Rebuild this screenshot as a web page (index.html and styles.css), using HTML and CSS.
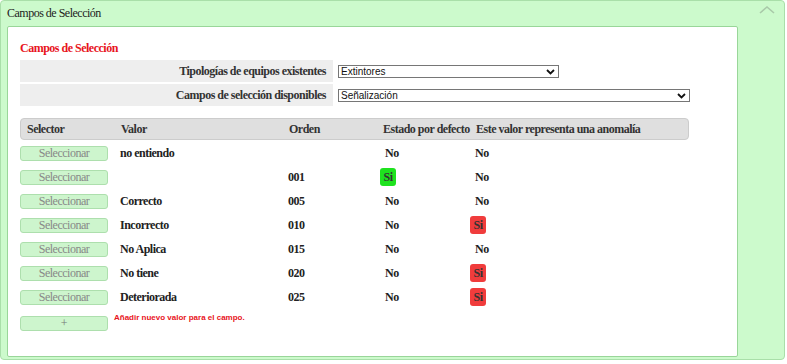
FILE: index.html
```html
<!DOCTYPE html>
<html lang="es">
<head>
    <meta charset="UTF-8">
    <meta name="viewport" content="width=device-width, initial-scale=1.0">
    <title>Campos de Selección</title>
    <link rel="stylesheet" href="styles.css">
</head>
<body>
    <div class="panel">
        <div class="panel-head">
            <span>Campos de Selección</span>
            <svg class="toggle" width="18" height="10" viewBox="0 0 18 10"><path d="M2 8 L9 2 L16 8" fill="none" stroke="#a9c9a9" stroke-width="1.6"/></svg>
        </div>

        <div class="panel-body">
            <h2 class="title">Campos de Selección</h2>

            <div class="filters">
                <div class="filter-row">
                    <div class="filter-label">Tipologías de equipos existentes</div>
                    <div class="filter-field">
                        <div class="select-wrap short">
                            <select><option>Extintores</option></select>
                            <svg class="caret" width="9" height="6" viewBox="0 0 9 6"><path d="M1 1 L4.5 4.5 L8 1" fill="none" stroke="#111" stroke-width="1.8"/></svg>
                        </div>
                    </div>
                </div>
                <div class="filter-row">
                    <div class="filter-label">Campos de selección disponibles</div>
                    <div class="filter-field">
                        <div class="select-wrap long">
                            <select><option>Señalización</option></select>
                            <svg class="caret" width="9" height="6" viewBox="0 0 9 6"><path d="M1 1 L4.5 4.5 L8 1" fill="none" stroke="#111" stroke-width="1.8"/></svg>
                        </div>
                    </div>
                </div>
            </div>

            <div class="values">
                <div class="values-head">
                    <div class="th first">Selector</div>
                    <div class="th">Valor</div>
                    <div class="th">Orden</div>
                    <div class="th">Estado por defecto</div>
                    <div class="th">Este valor representa una anomalía</div>
                </div>

                <div class="value-row">
                    <div><button class="pick">Seleccionar</button></div>
                    <div>no entiendo</div>
                    <div></div>
                    <div class="state">No</div>
                    <div>No</div>
                </div>
                <div class="value-row">
                    <div><button class="pick">Seleccionar</button></div>
                    <div></div>
                    <div>001</div>
                    <div class="state"><span class="badge on">Si</span></div>
                    <div>No</div>
                </div>
                <div class="value-row">
                    <div><button class="pick">Seleccionar</button></div>
                    <div>Correcto</div>
                    <div>005</div>
                    <div class="state">No</div>
                    <div>No</div>
                </div>
                <div class="value-row">
                    <div><button class="pick">Seleccionar</button></div>
                    <div>Incorrecto</div>
                    <div>010</div>
                    <div class="state">No</div>
                    <div><span class="badge bad">Si</span></div>
                </div>
                <div class="value-row">
                    <div><button class="pick">Seleccionar</button></div>
                    <div>No Aplica</div>
                    <div>015</div>
                    <div class="state">No</div>
                    <div>No</div>
                </div>
                <div class="value-row">
                    <div><button class="pick">Seleccionar</button></div>
                    <div>No tiene</div>
                    <div>020</div>
                    <div class="state">No</div>
                    <div><span class="badge bad">Si</span></div>
                </div>
                <div class="value-row">
                    <div><button class="pick">Seleccionar</button></div>
                    <div>Deteriorada</div>
                    <div>025</div>
                    <div class="state">No</div>
                    <div><span class="badge bad">Si</span></div>
                </div>
            </div>

            <div class="add-row">
                <button class="pick add">+</button>
                <span class="add-hint">Añadir nuevo valor para el campo.</span>
            </div>
        </div>
    </div>
</body>
</html>
```

FILE: styles.css
```css
body {
    margin: 0;
    padding: 0;
    background-color: #fff;
    font-family: "Liberation Serif", "Times New Roman", serif;
    letter-spacing: -0.5px;
    color: #222;
}
.panel {
    width: 785px;
    height: 360px;
    box-sizing: border-box;
    background-color: #ccfacc;
    border: 1px solid #a9dfa9;
    border-radius: 4px;
}
.panel-head {
    height: 25px;
    display: flex;
    align-items: center;
    justify-content: space-between;
    padding: 0 8px 0 6px;
    font-size: 12px;
    color: #222;
}
.toggle {
    margin-top: -8px;
}
.panel-body {
    margin-left: 6px;
    width: 731px;
    height: 331px;
    box-sizing: border-box;
    background-color: #fff;
    border: 1px solid #99d699;
    border-radius: 2px;
    padding: 14px 12px 0 12px;
}
.title {
    margin: 0 0 4px 0;
    font-size: 12px;
    line-height: 15px;
    color: #e8141c;
    font-weight: bold;
}
.filters {
    display: flex;
    flex-direction: column;
    gap: 2px;
}
.filter-row {
    display: flex;
    height: 22px;
}
.filter-label {
    width: 313px;
    box-sizing: border-box;
    background-color: #eeeeee;
    text-align: right;
    padding-right: 7px;
    font-size: 12px;
    font-weight: bold;
    line-height: 22px;
    color: #333;
}
.filter-field {
    display: flex;
    align-items: center;
    padding-left: 5px;
}
.select-wrap {
    position: relative;
}
.select-wrap select {
    appearance: none;
    -webkit-appearance: none;
    display: block;
    height: 13px;
    box-sizing: border-box;
    border: 1px solid #767676;
    border-radius: 0;
    background-color: #fff;
    padding: 0 0 0 2px;
    font-family: "Liberation Sans", Arial, sans-serif;
    font-size: 10px;
    line-height: 11px;
    letter-spacing: 0;
    color: #111;
}
.short select {
    width: 221px;
}
.long select {
    width: 352px;
}
.caret {
    position: absolute;
    right: 4px;
    top: 4px;
}
.values {
    margin-top: 12px;
    width: 669px;
}
.values-head,
.value-row {
    display: grid;
    grid-template-columns: 100px 168px 94px 93px 214px;
    align-items: center;
}
.values-head {
    height: 22px;
    box-sizing: border-box;
    background-color: #dfdfdf;
    border: 1px solid #cccccc;
    border-radius: 4px;
    font-size: 12px;
    font-weight: bold;
    color: #333;
    margin-bottom: 1px;
}
.th.first {
    padding-left: 6px;
}
.value-row {
    height: 24px;
    font-size: 12px;
    font-weight: bold;
    color: #222;
}
.state {
    padding-left: 3px;
}
.pick {
    display: block;
    width: 88px;
    height: 15px;
    padding: 0;
    background-color: #cdf5cd;
    border: 1px solid #addfad;
    border-radius: 3px;
    font-family: "Liberation Serif", "Times New Roman", serif;
    font-size: 12px;
    letter-spacing: -0.5px;
    line-height: 13px;
    color: #888;
    cursor: pointer;
}
.badge {
    display: inline-block;
    margin-left: -5px;
    width: 16px;
    height: 18px;
    line-height: 18px;
    text-align: center;
    border-radius: 3px;
    font-size: 12px;
    color: #333;
}
.badge.on {
    background-color: #1ee21e;
}
.badge.bad {
    background-color: #f03c3c;
}
.add-row {
    display: flex;
    align-items: flex-start;
    margin-top: 7px;
}
.add {
    font-size: 12px;
    color: #777;
}
.add-hint {
    margin-left: 6px;
    margin-top: -3px;
    font-family: "Liberation Sans", Arial, sans-serif;
    font-size: 8px;
    font-weight: bold;
    letter-spacing: 0;
    color: #e8141c;
}
```
